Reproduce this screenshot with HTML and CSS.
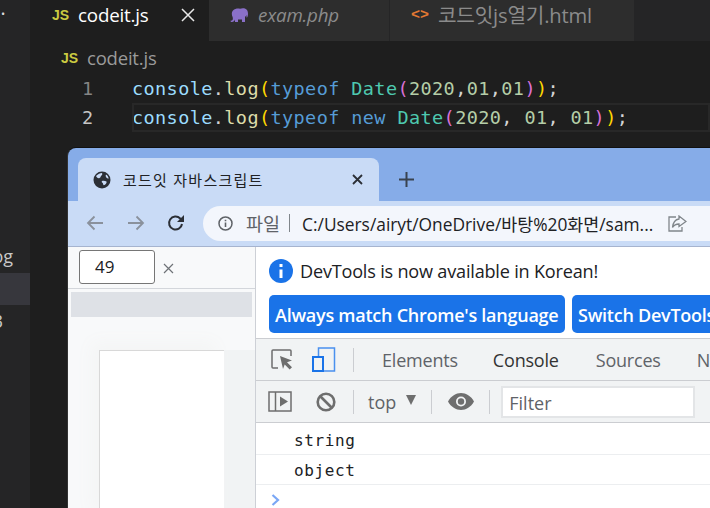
FILE: index.html
```html
<!DOCTYPE html>
<html lang="ko">
<head>
<meta charset="utf-8">
<title>codeit.js</title>
<link rel="stylesheet" href="styles.css">
</head>
<body>
<div class="app">
  <aside class="sidebar">
    <div class="side-dot">•</div>
    <div class="side-row"><span>log</span></div>
    <div class="side-row side-selected"></div>
    <div class="side-row side-cut"><span>3</span></div>
  </aside>
  <main class="editor">
    <div class="tabs">
      <div class="tab tab-active">
        <span class="js-icon">JS</span><span class="tab-name">codeit.js</span>
        <svg class="tab-close" width="14" height="14" viewBox="0 0 14 14"><path d="M1 1l12 12M13 1L1 13" stroke="#e8e8e8" stroke-width="1.5" fill="none"/></svg>
      </div>
      <div class="tab tab-exam">
        <svg class="elephant" width="19" height="15" viewBox="0 0 19 15"><path d="M3 2.500C5 .5 8 .3 10 .8c2-.9 5-.9 6.500.7 1.500 1.500 1.800 4 1.200 6.500-.3 1.200-.7 1.500-1.200 1.500V7c-.4 1-.9 1.500-1.500 1.800V14h-3v-2.500H8V14H5v-2.500C4.500 13 3.500 14 2 14c-1 0-1.500-.6-1.500-1.300l1.500-.2C3 12 3 10.500 2.600 9 1.500 7 1.500 4 3 2.500z" fill="#8a70c8"/></svg>
        <span class="tab-name tab-italic">exam.php</span>
      </div>
      <div class="tab tab-html">
        <span class="code-icon">&lt;&gt;</span><span class="tab-name tab-dim tab-wide">코드잇js열기.html</span>
      </div>
    </div>
    <div class="crumbs"><span class="js-icon">JS</span><span class="crumb-name">codeit.js</span></div>
    <div class="code">
      <div class="line">
        <span class="num">1</span>
        <span class="src"><i class="v">console</i>.<i class="f">log</i><i class="y">(</i><i class="k">typeof</i> <i class="t">Date</i><i class="p">(</i><i class="n">2020</i>,<i class="n">01</i>,<i class="n">01</i><i class="p">)</i><i class="y">)</i>;</span>
      </div>
      <div class="line line-current">
        <span class="num num-current">2</span>
        <span class="src"><i class="v">console</i>.<i class="f">log</i><i class="y">(</i><i class="k">typeof</i> <i class="k">new</i> <i class="t">Date</i><i class="p">(</i><i class="n">2020</i>, <i class="n">01</i>, <i class="n">01</i><i class="p">)</i><i class="y">)</i>;</span>
      </div>
    </div>
  </main>
  <section class="browser">
    <div class="strip">
      <div class="btab">
        <svg class="globe" width="18" height="18" viewBox="0 0 18 18"><circle cx="9" cy="9" r="8.500" fill="#2b2f36"/><path d="M3 5c2-2 4-3 6-3 .5 1 .3 2-.5 2.500C7.500 5 8 6.500 6.500 7 5.500 7.500 4 7 3 5zM9 10c1.500-.5 3-.2 4.500.5.500 1-.5 2.500-2 3.500-1 .5-1.500-.5-1.500-1.500S8 11.500 9 10zM13 3.500c1.500 1 2.500 2.500 2.700 4-1 0-2-.5-2.700-1.500-.5-.8-.5-1.700 0-2.500z" fill="#c9dbf6"/></svg>
        <span class="btab-title">코드잇 자바스크립트</span>
        <svg class="btab-close" width="11" height="11" viewBox="0 0 11 11"><path d="M1 1l9 9M10 1l-9 9" stroke="#2b2f36" stroke-width="1.800" fill="none"/></svg>
      </div>
      <svg class="plus" width="15" height="15" viewBox="0 0 15 15"><path d="M7.500 0v15M0 7.500h15" stroke="#39424f" stroke-width="2" fill="none"/></svg>
    </div>
    <div class="nav">
      <svg class="nav-icon" width="18" height="16" viewBox="0 0 18 16"><path d="M17 8H2M8.500 1.500L2 8l6.500 6.500" stroke="#8a919c" stroke-width="1.800" fill="none"/></svg>
      <svg class="nav-icon nav-forward" width="18" height="16" viewBox="0 0 18 16"><path d="M1 8h15M9.500 1.500L16 8l-6.500 6.500" stroke="#8a919c" stroke-width="1.800" fill="none"/></svg>
      <svg class="nav-icon nav-reload" width="18" height="18" viewBox="0 0 18 18"><path d="M15 10a6.500 6.500 0 1 1-1.800-5.500L15 6.300" stroke="#2b2f36" stroke-width="2" fill="none"/><path d="M17 1v7h-7z" fill="#2b2f36"/></svg>
      <div class="omnibox">
        <svg class="info-small" width="15" height="15" viewBox="0 0 15 15"><circle cx="7.500" cy="7.500" r="6.500" stroke="#5f6368" stroke-width="1.500" fill="none"/><path d="M7.500 6.500v4.500M7.500 3.700v1.500" stroke="#5f6368" stroke-width="1.600"/></svg>
        <span class="scheme">파일</span><span class="bar"></span>
        <span class="url">C:/Users/airyt/OneDrive/바탕%20화면/sam...</span>
        <svg class="share" width="19" height="17" viewBox="0 0 19 17"><path d="M8 2H1v14h13v-4" stroke="#80868b" stroke-width="1.300" fill="none"/><path d="M11 1l7 5.500-7 5V9C8 9 6 10 4.500 12.500 5 8 7 4.500 11 4z" stroke="#80868b" stroke-width="1.300" fill="none"/></svg>
      </div>
    </div>
    <div class="content">
      <div class="viewport">
        <div class="device-bar">
          <div class="size-input">49</div>
          <svg class="size-x" width="11" height="11" viewBox="0 0 11 11"><path d="M1 1l9 9M10 1l-9 9" stroke="#6e7276" stroke-width="1.200" fill="none"/></svg>
        </div>
        <div class="ruler"></div>
        <div class="stage"><div class="page"></div></div>
      </div>
      <div class="devtools">
        <div class="infobar">
          <div class="info-line">
            <svg class="info-big" width="24" height="24" viewBox="0 0 24 24"><circle cx="12" cy="12" r="12" fill="#1a73e8"/><path d="M12 10.500V19M12 5v3" stroke="#fff" stroke-width="3"/></svg>
            <span class="info-text">DevTools is now available in Korean!</span>
          </div>
          <div class="info-buttons">
            <span class="info-btn">Always match Chrome's language</span>
            <span class="info-btn info-btn-b">Switch DevTools to Korean</span>
          </div>
        </div>
        <div class="panel-tabs">
          <svg class="inspect" width="22" height="21" viewBox="0 0 22 21"><path d="M7 19H2a1 1 0 0 1-1-1V2a1 1 0 0 1 1-1h17a1 1 0 0 1 1 1v5" stroke="#6e6e6e" stroke-width="1.500" fill="none"/><path d="M9 7l12 4.500-5 1.800 5 5-2.300 2.200-5-5L12 20z" fill="#6e6e6e"/></svg>
          <svg class="device" width="24" height="25" viewBox="0 0 24 25"><path d="M6.500 9V1h16v23h-11" stroke="#4a90ee" stroke-width="1.500" fill="none"/><rect x="1" y="10" width="10" height="14" stroke="#1a73e8" stroke-width="2" fill="none"/></svg>
          <span class="sep sep-tabs"></span>
          <span class="ptab ptab-elements">Elements</span>
          <span class="ptab ptab-console">Console</span>
          <span class="ptab ptab-sources">Sources</span>
          <span class="ptab ptab-network">Network</span>
        </div>
        <div class="console-bar">
          <svg class="toggle" width="24" height="21" viewBox="0 0 24 21"><rect x="1" y="1" width="22" height="19" stroke="#6e6e6e" stroke-width="1.500" fill="none"/><path d="M7.500 1v19" stroke="#6e6e6e" stroke-width="1.500"/><path d="M12 5.500l8 5-8 5z" fill="#6e6e6e"/></svg>
          <svg class="block" width="20" height="20" viewBox="0 0 20 20"><circle cx="10" cy="10" r="8.300" stroke="#6e6e6e" stroke-width="2.600" fill="none"/><path d="M4 4l12 12" stroke="#6e6e6e" stroke-width="2.600"/></svg>
          <span class="sep sep-a"></span>
          <span class="context">top</span>
          <svg class="caret" width="12" height="10" viewBox="0 0 12 10"><path d="M1 0h10L6 10z" fill="#6e6e6e"/></svg>
          <span class="sep sep-b"></span>
          <svg class="eye" width="26" height="17" viewBox="0 0 26 17"><path d="M0 8.500C3 3 8 0 13 0s10 3 13 8.500C23 14 18 17 13 17S3 14 0 8.500z" fill="#6e6e6e"/><circle cx="13" cy="8.500" r="5" fill="#f1f3f4"/><circle cx="13" cy="8.500" r="3.200" fill="#6e6e6e"/></svg>
          <span class="sep sep-c"></span>
          <div class="filter">Filter</div>
        </div>
        <div class="log-row log-first">string</div>
        <div class="log-row">object</div>
        <div class="prompt"><svg width="9" height="12" viewBox="0 0 9 12"><path d="M1.500 1l5.500 5-5.500 5" stroke="#7aa7f5" stroke-width="2.200" fill="none"/></svg></div>
      </div>
    </div>
  </section>
</div>
</body>
</html>
```

FILE: styles.css
```css
* { box-sizing: border-box; }
html, body { margin: 0; height: 100%; overflow: hidden; }
body { background: #1e1e1e; font-family: "Open Sans", "Noto Sans CJK KR", sans-serif; }
i { font-style: normal; }
svg { flex: none; }

.app { position: relative; display: flex; width: 710px; height: 508px; overflow: hidden; }

.sidebar { width: 30px; flex: none; background: #252526; color: #c8c8c8; font-size: 18px; }
.side-dot { height: 240px; padding: 3px 0 0 1px; font-size: 11px; line-height: 22px; color: #ddd; }
.side-row { height: 32.500px; display: flex; justify-content: flex-end; align-items: center; padding-right: 17px; white-space: nowrap; overflow: hidden; }
.side-cut { padding-right: 27px; }
.side-selected { background: #37373d; }

.editor { flex: 1; min-width: 0; background: #1e1e1e; }

.tabs { display: flex; height: 41px; background: #252526; }
.tab { display: flex; align-items: center; height: 41px; flex: none; background: #2d2d2d; padding-bottom: 11px; }
.tab-active { width: 179px; background: #1e1e1e; padding-left: 22px; }
.tab-exam { width: 181px; padding-left: 21px; border-right: 1px solid #252526; }
.tab-html { width: 244px; padding-left: 21px; }
.js-icon { width: 26px; flex: none; color: #cbcb41; font: bold 14px/1 "Liberation Sans", sans-serif; }
.tab-name { font-size: 18.800px; line-height: 24px; color: #fff; white-space: nowrap; letter-spacing: -.2px; }
.tab-close { margin-left: 32px; }
.elephant { margin-right: 9px; }
.tab-italic { font-style: italic; color: #8b8b8b; }
.tab-dim { color: #8b8b8b; }
.tab-wide { font-size: 20.200px; }
.code-icon { width: 27px; flex: none; color: #e37933; font: bold 15px/1 "Liberation Mono", monospace; }

.crumbs { display: flex; align-items: center; height: 33px; padding-left: 31px; }
.crumb-name { font-size: 18.500px; color: #9a9a9a; letter-spacing: -.2px; }

.code { font: 18.500px/29px "DejaVu Sans Mono", monospace; letter-spacing: .4px; color: #d4d4d4; }
.line { display: flex; height: 29px; white-space: pre; }
.num { width: 102px; flex: none; padding-left: 52px; color: #858585; }
.num-current { color: #c6c6c6; }
.line-current .src { flex: 1; outline: 2px solid #282828; outline-offset: -2px; }
.v { color: #9cdcfe; }
.f { color: #dcdcaa; }
.y { color: #ffd700; }
.k { color: #569cd6; }
.t { color: #4ec9b0; }
.p { color: #da70d6; }
.n { color: #b5cea8; }

.browser { position: absolute; left: 68px; top: 148px; width: 660px; height: 380px; background: #86ace8; border-radius: 8px 0 0 0; box-shadow: 0 -1px 0 #111, -1px 0 0 #333; overflow: hidden; }

.strip { display: flex; align-items: flex-end; height: 53px; padding-left: 10px; }
.btab { display: flex; align-items: center; width: 301px; height: 43px; padding: 0 16px 0 15px; background: #c9dbf6; border-radius: 8px 8px 0 0; }
.btab-title { flex: 1; margin-left: 12px; font-size: 15px; letter-spacing: 1.250px; color: #202124; white-space: nowrap; }
.plus { margin: 0 0 14px 20px; }

.nav { display: flex; align-items: center; height: 46px; padding: 0 0 1px 18px; background: #c9dbf6; border-bottom: 1px solid #a6b4cf; }
.nav-forward { margin-left: 23px; }
.nav-reload { margin-left: 22px; }
.omnibox { display: flex; align-items: center; width: 530px; height: 35px; margin-left: 18px; padding-left: 15px; background: #f3f6fc; border-radius: 18px 0 0 18px; white-space: nowrap; }
.scheme { margin-left: 13px; font-size: 18.500px; color: #5f6368; }
.bar { width: 1px; height: 18px; flex: none; margin-left: 9px; background: #80868b; }
.url { width: 351px; margin-left: 12px; font-size: 17.350px; color: #202124; overflow: hidden; }
.share { margin-left: 15px; }

.content { display: flex; height: 282px; background: #fff; }
.viewport { width: 188px; flex: none; background: #f8f9fa; border-right: 1px solid #cdd0d6; }
.device-bar { display: flex; align-items: center; height: 42px; padding: 3px 0 5px 11px; border-bottom: 1px solid #d3d6db; }
.size-input { width: 76px; height: 34px; padding-left: 15px; background: #fff; border: 1px solid #767676; border-radius: 3px; font-size: 17px; line-height: 32px; color: #202124; }
.size-x { margin-left: 8px; margin-top: 4px; }
.ruler { height: 25px; margin: 3px 3px 0; background: #dee1e6; }
.stage { display: flex; height: 200px; padding: 33px 0 0 31px; background: linear-gradient(#f8f9fa 33px, transparent 33px), linear-gradient(90deg, #f8f9fa 31px, #f1f3f4 31px); }
.page { width: 125px; height: 170px; background: #fff; border-left: 1px solid #d8d8d8; border-top: 1px solid #d8d8d8; box-shadow: -8px -8px 16px #f4f5f5; }

.devtools { flex: 1; min-width: 0; background: #fff; }
.infobar { height: 92px; padding: 0 0 0 13px; border-bottom: 1px solid #cbcdd1; overflow: hidden; }
.info-line { display: flex; align-items: center; height: 48px; }
.info-text { margin-left: 7px; font-size: 18.100px; color: #202124; white-space: nowrap; letter-spacing: -.2px; }
.info-buttons { display: flex; gap: 7px; white-space: nowrap; }
.info-btn { width: 296px; height: 38px; flex: none; padding-left: 6px; background: #1a73e8; border-radius: 5px; color: #fff; font-size: 18px; font-weight: 600; line-height: 40px; letter-spacing: -.25px; }
.info-btn-b { width: 300px; }

.panel-tabs { display: flex; align-items: center; height: 42px; padding-left: 15px; background: #f1f3f4; border-bottom: 1px solid #cbcdd1; overflow: hidden; white-space: nowrap; }
.device { margin-left: 19px; }
.sep { width: 1px; height: 24px; flex: none; background: #cbcdd1; }
.sep-tabs { margin-left: 17px; }
.ptab { flex: none; font-size: 18px; color: #5f6368; letter-spacing: -.2px; }
.ptab-elements { margin-left: 28px; }
.ptab-console { position: relative; height: 42px; margin-left: 35px; line-height: 43px; color: #333; }
.ptab-console::after { content: ""; position: absolute; left: -18px; right: -18px; bottom: 0; height: 1px; background: #1a73e8; }
.ptab-sources { margin-left: 37px; }
.ptab-network { margin-left: 36px; }

.console-bar { display: flex; align-items: center; height: 42px; padding-left: 12px; background: #f1f3f4; border-bottom: 1px solid #cbcdd1; white-space: nowrap; }
.block { margin-left: 24px; }
.sep-a { margin-left: 17px; }
.context { margin-left: 14px; font-size: 18px; color: #5f6368; }
.caret { margin-left: 9px; margin-bottom: 3px; }
.sep-b { margin-left: 14px; }
.eye { margin-left: 16px; }
.sep-c { margin-left: 15px; }
.filter { width: 194px; height: 32px; flex: none; margin-left: 11px; padding-left: 6px; background: #fff; border: 2px solid #e3e5e7; font-size: 18px; line-height: 30px; color: #5f6368; }

.log-row { height: 30px; padding-left: 38px; border-bottom: 1px solid #eceef0; font: 16px/31px "DejaVu Sans Mono", monospace; color: #202124; letter-spacing: .6px; }
.log-first { height: 32px; line-height: 35px; }
.prompt { padding: 9px 0 0 15px; line-height: 0; }
```
